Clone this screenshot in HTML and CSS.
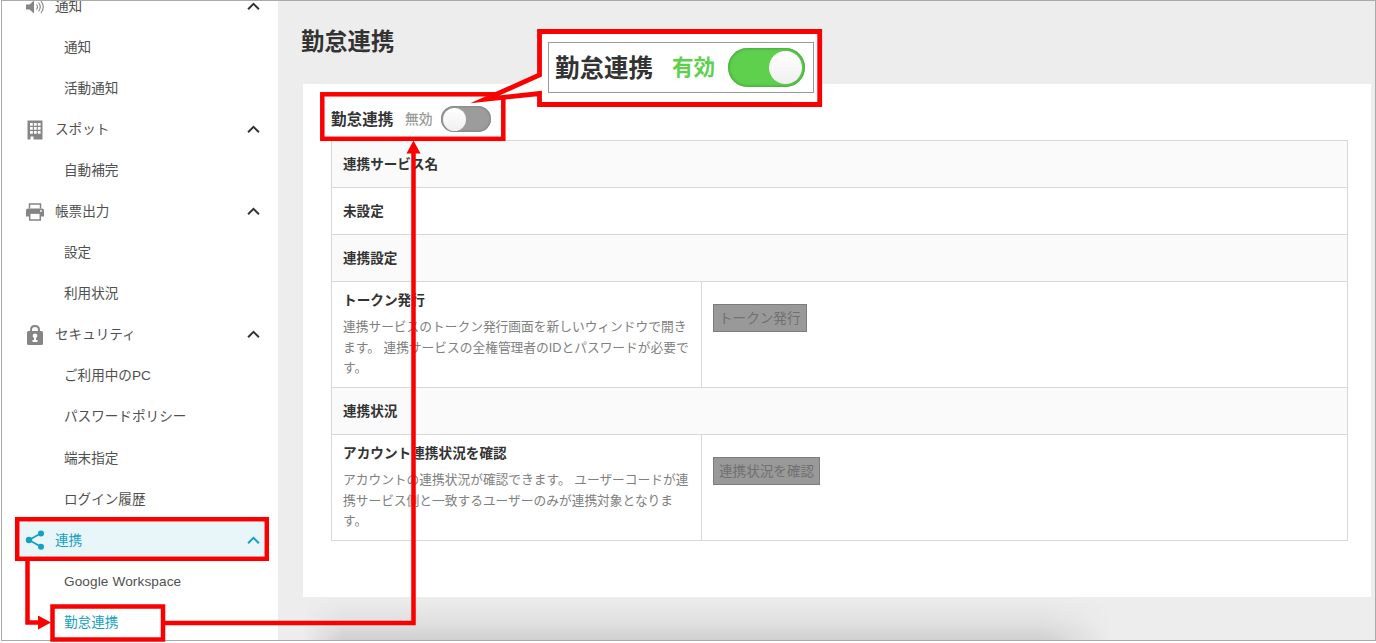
FILE: index.html
```html
<!DOCTYPE html>
<html lang="ja">
<head>
  <meta charset="UTF-8" />
  <meta name="viewport" content="width=device-width, initial-scale=1.0"/>
  <title>勤怠連携</title>
  <link rel="stylesheet" href="styles.css">
</head>
<body>
  <div class="window">
    <!-- Sidebar -->
    <nav class="sidebar">
      <ul class="menu">
        <li class="menu-group">
          <svg class="icon" viewBox="0 0 20 20"><path d="M1 7.500h3.500L9 3.500v13l-4.500-4H1z" fill="#858585"/><path d="M11.500 7.500q2 2.500 0 5M13.500 5.500q3.500 4.500 0 9M16 4q4.500 6 0 12" fill="none" stroke="#858585" stroke-width="1.100"/></svg>
          <span>通知</span>
          <svg class="chevron" viewBox="0 0 12 8"><path d="M1 6.500L6 1.500l5 5"/></svg>
        </li>
        <li class="menu-item">通知</li>
        <li class="menu-item">活動通知</li>
        <li class="menu-group">
          <svg class="icon" viewBox="0 0 20 20"><path d="M2.500 0.500h15v19h-9v-3h-3v3h-3z" fill="#858585"/><path d="M5 3h2.800v2.800H5zM8.900 3h2.800v2.800H8.900zM12.800 3h2.800v2.800h-2.800zM5 7h2.800v2.800H5zM8.900 7h2.800v2.800H8.900zM12.800 7h2.800v2.800h-2.800zM5 11h2.800v2.800H5zM8.900 11h2.800v2.800H8.900zM12.800 11h2.800v2.800h-2.800z" fill="#fff"/></svg>
          <span>スポット</span>
          <svg class="chevron" viewBox="0 0 12 8"><path d="M1 6.500L6 1.500l5 5"/></svg>
        </li>
        <li class="menu-item">自動補完</li>
        <li class="menu-group">
          <svg class="icon" viewBox="0 0 20 20"><path d="M3 6.500q-2 0-2 2v6h3v-3h12v3h3v-6q0-2-2-2z" fill="#858585"/><path d="M4.500 6.500V2h11v4.500M4.700 11v7h10.600v-7z" fill="none" stroke="#858585" stroke-width="1.500"/><circle cx="16" cy="9" r="0.900" fill="#fff"/></svg>
          <span>帳票出力</span>
          <svg class="chevron" viewBox="0 0 12 8"><path d="M1 6.500L6 1.500l5 5"/></svg>
        </li>
        <li class="menu-item">設定</li>
        <li class="menu-item">利用状況</li>
        <li class="menu-group">
          <svg class="icon" viewBox="0 0 20 20"><rect x="2" y="6" width="16" height="14" rx="1.500" fill="#858585"/><path d="M6 7V5q0-4 4-4t4 4v2" fill="none" stroke="#858585" stroke-width="2"/><path d="M10 8.500a2.300 2.300 0 0 1 1 4.400v2h1.500v2H7.500v-2H9v-2a2.300 2.300 0 0 1 1-4.400z" fill="#fff"/></svg>
          <span>セキュリティ</span>
          <svg class="chevron" viewBox="0 0 12 8"><path d="M1 6.500L6 1.500l5 5"/></svg>
        </li>
        <li class="menu-item">ご利用中のPC</li>
        <li class="menu-item">パスワードポリシー</li>
        <li class="menu-item">端末指定</li>
        <li class="menu-item">ログイン履歴</li>
        <li class="menu-group active">
          <svg class="icon" viewBox="0 0 20 20"><path d="M16 3.300L4 10l12 6.700" fill="none" stroke="#14a0c4" stroke-width="1.700"/><circle cx="4" cy="10" r="3.200" fill="#14a0c4"/><circle cx="16" cy="3.400" r="3" fill="#14a0c4"/><circle cx="16" cy="16.800" r="3" fill="#14a0c4"/></svg>
          <span>連携</span>
          <svg class="chevron" viewBox="0 0 12 8"><path d="M1 6.500L6 1.500l5 5"/></svg>
        </li>
        <li class="menu-item latin">Google Workspace</li>
        <li class="menu-item current">勤怠連携</li>
      </ul>
    </nav>

    <!-- Main Content -->
    <main class="content">
      <h1>勤怠連携</h1>
      <section class="panel">
        <div class="toggle-row">
          <span class="toggle-title">勤怠連携</span>
          <span class="toggle-state">無効</span>
          <span class="switch"></span>
        </div>
        <div class="table">
          <div class="row heading">連携サービス名</div>
          <div class="row">未設定</div>
          <div class="row heading">連携設定</div>
          <div class="row detail">
            <div class="cell">
              <h2>トークン発行</h2>
              <p>連携サービスのトークン発行画面を新しいウィンドウで開き<br>ます。 連携サービスの全権管理者のIDとパスワードが必要で<br>す。</p>
            </div>
            <div class="action"><button class="button" disabled>トークン発行</button></div>
          </div>
          <div class="row heading">連携状況</div>
          <div class="row detail">
            <div class="cell">
              <h2>アカウント連携状況を確認</h2>
              <p>アカウントの連携状況が確認できます。 ユーザーコードが連<br>携サービス側と一致するユーザーのみが連携対象となりま<br>す。</p>
            </div>
            <div class="action"><button class="button" disabled>連携状況を確認</button></div>
          </div>
        </div>
      </section>
      <div class="bottom-shade"></div>
    </main>
  </div>

  <!-- Red frames, arrows and the callout outline -->
  <svg class="marks" viewBox="0 0 1376 643">
    <g fill="none" stroke="#fa0000" stroke-width="4.500">
      <rect x="17.200" y="519.200" width="249.600" height="39.600"/>
      <rect x="52.500" y="606.500" width="110.500" height="33"/>
      <rect x="322.300" y="94.300" width="181" height="44.500"/>
      <path d="M27.500 560v62.500H40"/>
      <path d="M165 623h248.500V152"/>
    </g>
    <path d="M38 615.500l13 7-13 7zM406.500 153.500l7-13 7 13z" fill="#fa0000"/>
    <path d="M539.500 31.500H819.700V104.500H539.500V93.500L485 99.300 539.500 75z" fill="#fff" stroke="#fa0000" stroke-width="4.800" stroke-miterlimit="12"/>
  </svg>
  <div class="callout">
    <span class="callout-title">勤怠連携</span>
    <span class="callout-state">有効</span>
    <span class="switch on"></span>
  </div>
</body>
</html>
```
FILE: styles.css
```css
* {
  box-sizing: border-box;
}

body {
  margin: 0;
  height: 643px;
  overflow: hidden;
  background-color: #fff;
  color: #333;
  font-family: "Liberation Sans", "Noto Sans CJK JP", sans-serif;
}

.window {
  display: flex;
  width: 1375px;
  height: 641px;
  margin-left: 1px;
  border: 1px solid #aaa;
  overflow: hidden;
  background-color: #ededed;
}

.sidebar {
  width: 276px;
  background-color: #fff;
}

.menu {
  list-style: none;
  margin: -15px 0 0;
  padding: 0;
  font-size: 13.6px;
  color: #505050;
}

.menu-group,
.menu-item {
  display: flex;
  align-items: center;
  height: 41.05px;
  white-space: nowrap;
}

.menu-group {
  margin: 0 10px 0 13px;
  padding: 0 8px 0 10px;
  gap: 10px;
}

.menu-group span {
  padding-bottom: 3px;
}

.menu-item {
  padding: 0 0 3px 62px;
}

.latin {
  padding-bottom: 0;
  letter-spacing: 0.12px;
}

.icon {
  width: 20px;
  height: 20px;
}

.chevron {
  width: 13px;
  height: 9px;
  margin-left: auto;
}

.chevron path {
  fill: none;
  stroke: #333;
  stroke-width: 1.8;
}

.active {
  background-color: #e8f6f9;
  color: #14a0c4;
}

.active .chevron path {
  stroke: #14a0c4;
}

.current {
  color: #14a0c4;
}

.content {
  display: flex;
  flex-direction: column;
  flex: 1;
  padding: 0 4px 0 25px;
}

h1 {
  height: 83px;
  margin: 0 0 0 -2px;
  padding-top: 23px;
  font-size: 23.3px;
  line-height: 36px;
}

.panel {
  height: 513px;
  padding: 7px 23px 0 28px;
  background-color: #fff;
}

.toggle-row {
  display: flex;
  align-items: center;
  height: 49px;
  padding-top: 7px;
}

.toggle-title {
  width: 74px;
  padding-bottom: 2px;
  font-size: 15.6px;
  font-weight: bold;
}

.toggle-state {
  width: 36px;
  padding-bottom: 3px;
  font-size: 13.8px;
  font-weight: 500;
  color: #999;
}

.switch {
  display: flex;
  width: 50px;
  height: 26px;
  padding: 1.5px;
  border-radius: 20px;
  background-color: #9c9c9c;
  box-shadow: inset 0 0 2px 1px #858585;
}

.switch::before {
  content: "";
  width: 23px;
  height: 23px;
  border-radius: 50%;
  background: linear-gradient(#fff, #f0f0f0);
}

.table {
  border: 1px solid #d8d8d8;
  font-size: 13.6px;
}

.row {
  display: flex;
  align-items: center;
  height: 47px;
  padding: 0 11px 3px;
  border-bottom: 1px solid #d8d8d8;
  font-weight: bold;
}

.heading {
  background-color: #fafafa;
}

.detail {
  align-items: stretch;
  height: 106px;
  padding: 0 11px;
}

.detail:last-child {
  height: 105px;
  border-bottom: none;
}

.cell {
  width: 359px;
  padding-top: 8px;
  border-right: 1px solid #d8d8d8;
}

.cell h2 {
  margin: 0;
  font-size: 13.65px;
  line-height: 21px;
}

.cell p {
  margin: 6px 0 0;
  font-size: 12.72px;
  font-weight: normal;
  line-height: 20.5px;
  color: #808080;
  white-space: nowrap;
}

.action {
  padding: 22px 0 0 11px;
}

.button {
  height: 28px;
  padding: 0 5px 3px;
  border: 1px solid #7c7c7c;
  background-color: #999;
  color: #707070;
  font-family: inherit;
  font-size: 13.6px;
}

.bottom-shade {
  width: 810px;
  height: 43px;
  background: linear-gradient(rgba(0, 0, 0, 0), rgba(0, 0, 0, 0.05) 60%, rgba(0, 0, 0, 0.12));
  -webkit-mask-image: linear-gradient(to right, transparent, #000 40px, #000 740px, transparent);
  mask-image: linear-gradient(to right, transparent, #000 40px, #000 740px, transparent);
}

/* annotations drawn over the window */
.marks {
  position: absolute;
  top: 0;
  left: 0;
  width: 1376px;
  height: 643px;
}

.callout {
  position: absolute;
  top: 42px;
  left: 548px;
  display: flex;
  align-items: center;
  width: 266px;
  height: 51px;
  padding-left: 6px;
  border: 1px solid #999;
  background-color: #fff;
}

.callout-title {
  width: 117px;
  padding-bottom: 3px;
  font-size: 24.5px;
  font-weight: bold;
}

.callout-state {
  width: 56px;
  padding-bottom: 5px;
  font-size: 21.5px;
  font-weight: bold;
  color: #5ed04e;
}

.switch.on {
  justify-content: flex-end;
  width: 77px;
  height: 39px;
  padding: 3px;
  background-color: #5ed04e;
  box-shadow: inset 0 0 3px 1px #4aa63d;
}

.switch.on::before {
  width: 33px;
  height: 33px;
}
```
